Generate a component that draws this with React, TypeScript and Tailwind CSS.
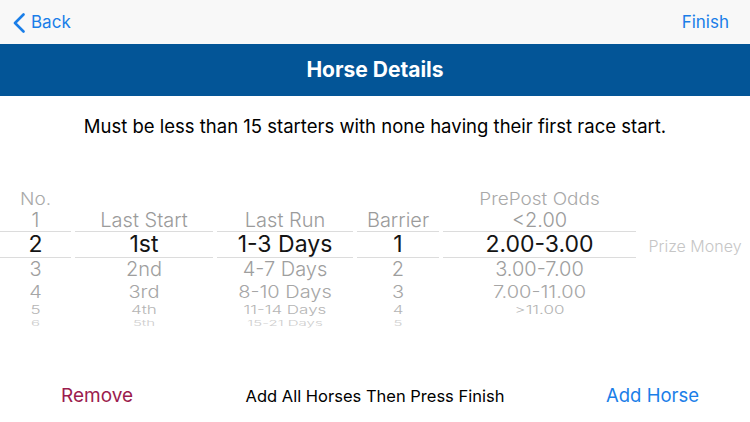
import React from 'react';

const columns = [
  { w: 'w-[71px]', rows: ['No.', '1', '2', '3', '4', '5', '6'] },
  { w: 'w-[138px]', rows: ['', 'Last Start', '1st', '2nd', '3rd', '4th', '5th'] },
  { w: 'w-[136px]', rows: ['', 'Last Run', '1-3 Days', '4-7 Days', '8-10 Days', '11-14 Days', '15-21 Days'] },
  { w: 'w-[82px]', rows: ['', 'Barrier', '1', '2', '3', '4', '5'] },
  { w: 'w-[193px]', rows: ['PrePost Odds', '<2.00', '2.00-3.00', '3.00-7.00', '7.00-11.00', '>11.00', ''] },
];

// wheel rows: each row gets flatter and lighter away from the selection band
const rowBox = [
  'h-[22px] pt-[2px]',
  'h-[22px]',
  'h-[28px] border-y border-[#dcdcdc]',
  'h-[21px] pt-[1px]',
  'h-[23px] pt-[3px]',
  'h-[16px] pt-[1px]',
  'h-[10px]',
];
const rowText = [
  'text-[19px] font-light text-[#a9a9a9] scale-y-90',
  'text-[20px] font-light text-[#9b9b9b]',
  'text-[23px] font-normal text-[#141414]',
  'text-[20px] font-light text-[#9e9e9e]',
  'text-[20px] font-light text-[#a6a6a6] scale-y-[0.85]',
  'text-[17px] font-light text-[#b5b5b5] scale-y-[0.65]',
  'text-[15px] font-light text-[#cdcdcd] scale-y-50',
];

function PickerColumn({ w, rows }: { w: string; rows: string[] }) {
  return (
    <div className={`${w} flex flex-col`}>
      {rows.map((r, i) => (
        <div key={i} className={`${rowBox[i]} flex items-center justify-center`}>
          <span className={`${rowText[i]} leading-none whitespace-nowrap`}>{r}</span>
        </div>
      ))}
    </div>
  );
}

export default function App() {
  return (
    <div className="w-[750px] h-[422px] bg-white flex flex-col overflow-hidden font-['Inter','Roboto',sans-serif]">
      {/* Nav bar */}
      <div className="h-[44px] bg-[#f8f8f8] flex items-center justify-between pl-[13px] pr-[21px] pt-[2px]">
        <div className="flex items-center gap-[6px] text-[#1a7ee8] text-[17px]">
          <svg width="12" height="20" viewBox="0 0 12 20" fill="none">
            <path d="M10.5 1.5 L2 10 L10.5 18.5" stroke="#1a7ee8" strokeWidth="2.6" strokeLinecap="round" strokeLinejoin="round" />
          </svg>
          <span>Back</span>
        </div>
        <span className="text-[#1a7ee8] text-[17px]">Finish</span>
      </div>

      {/* Title bar */}
      <div className="h-[52px] bg-[#035597] flex items-center justify-center">
        <h1 className="text-white text-[21px] font-bold">Horse Details</h1>
      </div>

      {/* Message */}
      <p className="pt-[19px] text-center text-[18.5px] leading-[22px] text-black">
        Must be less than 15 starters with none having their first race start.
      </p>

      {/* Picker */}
      <div className="mt-[51px] h-[140px] flex gap-1 overflow-hidden">
        {columns.map((c, i) => (
          <PickerColumn key={i} w={c.w} rows={c.rows} />
        ))}
        <div className="flex-1 flex flex-col">
          <div className="h-[44px]" />
          <div className="h-[28px] flex items-center justify-center">
            <span className="text-[16px] font-light text-[#c6c6c6] whitespace-nowrap">Prize Money</span>
          </div>
        </div>
      </div>

      {/* Bottom actions */}
      <div className="mt-auto h-[50px] mb-[1px] grid grid-cols-[1fr_auto_1fr] items-center">
        <span className="pl-[61px] text-[19px] text-[#9c1c4e]">Remove</span>
        <span className="text-[16.5px] text-black">Add All Horses Then Press Finish</span>
        <span className="justify-self-end pr-[51px] text-[18.5px] text-[#1a7ee8]">Add Horse</span>
      </div>
    </div>
  );
}
